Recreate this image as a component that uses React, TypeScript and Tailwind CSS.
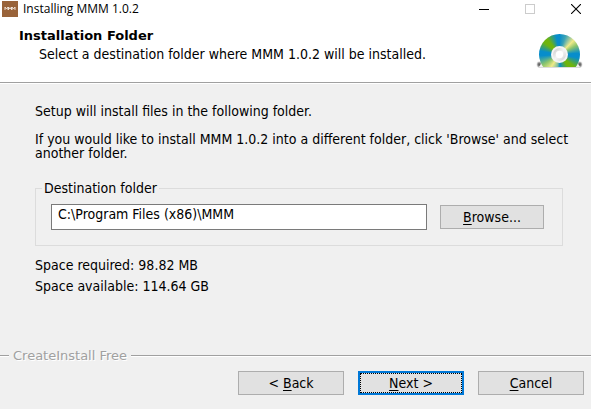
import type { ReactNode } from "react";

function DiscLogo() {
  return (
    <div className="relative h-[35px] w-[47px] shrink-0 overflow-hidden" role="img" aria-label="Disc">
      <svg className="absolute inset-0" width="47" height="35" viewBox="0 0 47 35">
        <defs>
          <radialGradient id="knob">
            <stop offset="0" stopColor="#555" />
            <stop offset=".5" stopColor="#888" />
            <stop offset="1" stopColor="#ddd" stopOpacity=".5" />
          </radialGradient>
        </defs>
        <path d="M2 31H45V33Q45 34 43 34H4Q2 34 2 33Z" fill="#dcdcdc" />
        <ellipse cx="3.200" cy="30.500" rx="2.800" ry="3.300" fill="url(#knob)" />
        <ellipse cx="43.800" cy="30.500" rx="2.800" ry="3.300" fill="url(#knob)" />
        <path d="M3 33L7 27H40L44 33Z" fill="#f0f0f0" />
      </svg>
      <div className="absolute left-[3px] top-0 h-[33px] w-[41px] overflow-hidden">
        <div className="size-[41px] rounded-full bg-[conic-gradient(#078dcb_0deg,#3da3b5_18deg,#f0ea88_45deg,#8cc56c_62deg,#078dcb_86deg,#078dcb_100deg,#6fb40d_130deg,#6fb40d_145deg,#078dcb_178deg,#7fc0a0_190deg,#f0ea88_214deg,#8cc56c_238deg,#078dcb_266deg,#078dcb_280deg,#6fb40d_308deg,#6fb40d_322deg,#078dcb_350deg)]" />
      </div>
      <svg className="absolute inset-0" width="47" height="35" viewBox="0 0 47 35">
        <defs>
          <linearGradient id="hub" x1="0" y1="0" x2="1" y2="1">
            <stop offset="0" stopColor="#c8c8c8" />
            <stop offset=".5" stopColor="#f4f4f4" />
            <stop offset="1" stopColor="#d0d0d0" />
          </linearGradient>
        </defs>
        <circle cx="23.500" cy="20.500" r="8.500" fill="#f4f4f4" />
        <circle cx="23.500" cy="20.500" r="6.500" fill="url(#hub)" />
        <circle cx="23.500" cy="20.500" r="3.700" fill="#fff" />
      </svg>
    </div>
  );
}

function TitleBar() {
  return (
    <div className="flex h-[18px] items-center bg-white pr-[10px] pl-[2px] font-['Open_Sans','Noto_Sans',sans-serif] text-xs">
      <svg width="16" height="16" viewBox="0 0 16 16" className="shrink-0">
        <rect width="16" height="16" fill="#99633a" />
        <path d="M3 9V6L4.500 8L6 6V9M6.500 9V6L8 8L9.500 6V9M10 9V6L11.500 8L13 6V9" fill="none" stroke="#f3e9e0" strokeWidth=".9" />
      </svg>
      <h1 className="ml-[5px] grow whitespace-nowrap">Installing MMM 1.0.2</h1>
      <div className="flex shrink-0 items-center gap-9">
        <button type="button" aria-label="Minimize">
          <svg width="10" height="10" viewBox="0 0 10 10" shapeRendering="crispEdges"><path d="M0 5.500H10" stroke="#000" /></svg>
        </button>
        <button type="button" aria-label="Maximize" disabled>
          <svg width="10" height="10" viewBox="0 0 10 10" shapeRendering="crispEdges"><rect x=".5" y=".5" width="9" height="9" fill="none" stroke="#ccc" /></svg>
        </button>
        <button type="button" aria-label="Close">
          <svg width="10" height="10" viewBox="0 0 10 10"><path d="M0 0L10 10M10 0L0 10" stroke="#000" strokeWidth="1.100" /></svg>
        </button>
      </div>
    </div>
  );
}

const buttonWidths = { normal: "w-[106px]", narrow: "w-[104px]" };

function PushButton({
  children,
  primary = false,
  size = "normal",
}: {
  children: ReactNode;
  primary?: boolean;
  size?: keyof typeof buttonWidths;
}) {
  const frame = primary ? "border-2 border-[#0078d7]" : "border border-[#adadad]";
  return (
    <button type="button" className={`h-6 shrink-0 bg-[#e1e1e1] ${frame} ${buttonWidths[size]}`}>
      {primary ? (
        <span className="flex h-5 items-center justify-center border border-dotted border-black">{children}</span>
      ) : (
        children
      )}
    </button>
  );
}

function Key({ children }: { children: ReactNode }) {
  return <span className="underline underline-offset-2">{children}</span>;
}

export default function App() {
  return (
    <div className="flex min-h-screen flex-col bg-[#f0f0f0] font-['DejaVu_Sans_Condensed','DejaVu_Sans',Verdana,sans-serif] text-[14px] leading-[14px] text-black">
      <TitleBar />
      <header className="flex items-start justify-between border-b border-[#a0a0a0] bg-white pr-2 pb-[13px] pl-[19px]">
        <div className="pt-[9px]">
          <h2 className="font-['DejaVu_Sans',Verdana,sans-serif] text-[13px] leading-[17px] font-bold">
            Installation Folder
          </h2>
          <p className="mt-[3px] pl-5">Select a destination folder where MMM 1.0.2 will be installed.</p>
        </div>
        <div className="pt-4">
          <DiscLogo />
        </div>
      </header>
      <main className="grow border-t border-white pt-5 pr-5 pl-[35px]">
        <p>Setup will install files in the following folder.</p>
        <p className="mt-[14px]">
          If you would like to install MMM 1.0.2 into a different folder, click 'Browse' and select another folder.
        </p>
        <fieldset className="mt-[21px] mr-2 border border-[#dcdcdc] px-[15px] pb-[15px]">
          <legend className="-ml-[9px] px-[2px]">
            <label htmlFor="folder">Destination folder</label>
          </legend>
          <div className="mt-[9px] flex items-center gap-[13px] pr-[3px]">
            <input
              id="folder"
              type="text"
              defaultValue="C:\Program Files (x86)\MMM"
              className="h-[26px] min-w-0 grow border border-[#7a7a7a] bg-white px-[6px] pb-[6px]"
            />
            <PushButton size="narrow">
              <Key>B</Key>rowse...
            </PushButton>
          </div>
        </fieldset>
        <p className="mt-3">Space required: 98.82 MB</p>
        <p className="mt-[7px]">Space available: 114.64 GB</p>
      </main>
      <footer className="pb-[14px]">
        <div className="flex items-center gap-1 text-[#a0a0a0]">
          <span className="h-[2px] w-[9px] border-t border-[#a0a0a0] bg-white" />
          <span className="font-['DejaVu_Sans',Verdana,sans-serif] text-[13px] [text-shadow:1px_1px_0_#fff]">
            CreateInstall Free
          </span>
          <span className="h-[2px] grow border-t border-[#a0a0a0] bg-white" />
        </div>
        <div className="mt-2 flex justify-end gap-[14px] pr-[7px]">
          <PushButton>
            &lt; <Key>B</Key>ack
          </PushButton>
          <PushButton primary>
            <span><Key>N</Key>ext &gt;</span>
          </PushButton>
          <PushButton>
            <Key>C</Key>ancel
          </PushButton>
        </div>
      </footer>
    </div>
  );
}
